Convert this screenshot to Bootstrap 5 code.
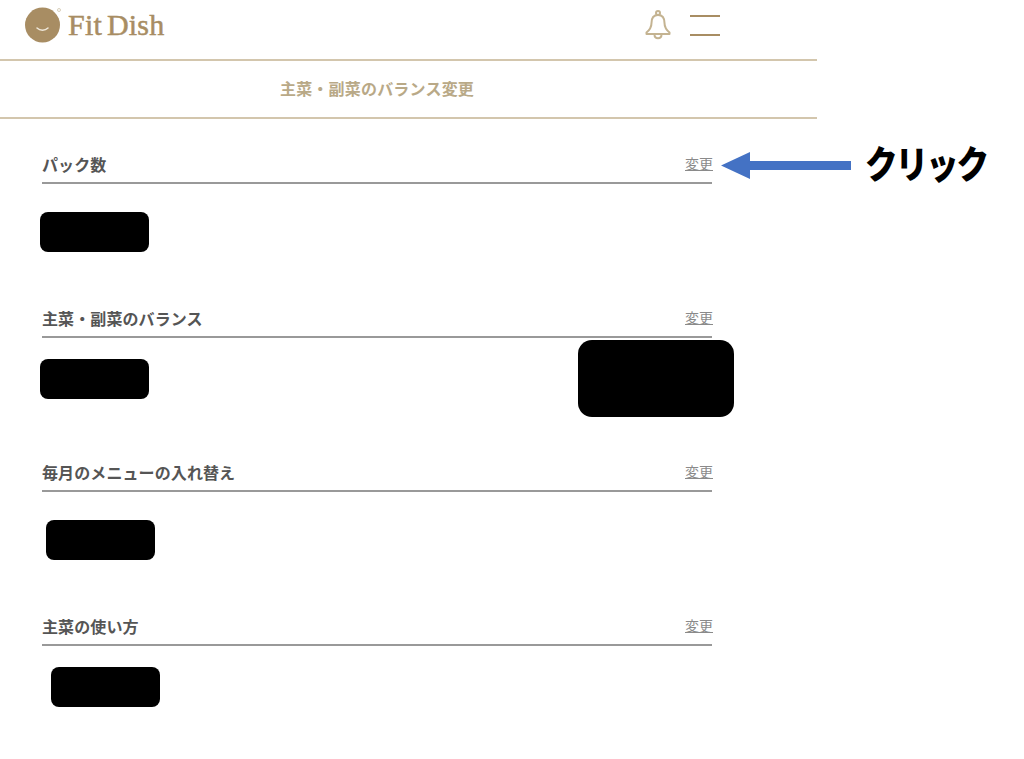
<!DOCTYPE html>
<html lang="ja">
<head>
  <meta charset="UTF-8" />
  <meta name="viewport" content="width=device-width, initial-scale=1.0"/>
  <title>主菜・副菜のバランス変更</title>
  <link href="https://cdn.jsdelivr.net/npm/bootstrap@5.3.0/dist/css/bootstrap.min.css" rel="stylesheet"/>
  <style>
    body {
      background: #fff;
      font-family: "Liberation Sans", "Noto Sans CJK JP", sans-serif;
      position: relative;
      min-height: 759px;
    }
    .app-frame { width: 817px; }
    .top-bar {
      height: 61px;
      padding: 0 97px 9px 25px;
      border-bottom: 2px solid #d3c6ad;
    }
    .brand-mark { margin-right: 3px; }
    .brand-name {
      font-family: "Liberation Serif", serif;
      font-size: 30px;
      line-height: 1;
      color: #a88d63;
      letter-spacing: .2px;
      -webkit-text-stroke: .5px #a88d63;
    }
    .brand-name span { margin-left: 5px; }
    .top-icons { gap: 19px; }
    .menu-lines { width: 30px; height: 21px; }
    .menu-lines div { height: 2px; background: #a88d63; }
    .page-title {
      height: 58px;
      padding: 2px 63px 0 0;
      border-bottom: 2px solid #d3c6ad;
      color: #b9a987;
      font-size: 16px;
      letter-spacing: .2px;
      font-weight: 700;
    }
    .setting-block { height: 154px; padding: 0 105px 0 42px; position: relative; }
    .setting-head {
      height: 27px;
      padding-bottom: 7px;
      border-bottom: 2px solid #999;
      color: #555;
      font-size: 16px;
      letter-spacing: .1px;
      font-weight: 700;
    }
    .setting-head a {
      color: #8a8a8a;
      font-size: 14px;
      font-weight: 400;
      letter-spacing: 0;
      margin: 0 -1px 4px 0;
    }
    .block-list { padding-top: 38px; }
    .mask-box { width: 109px; height: 40px; background: #000; border-radius: 8px; }
    .mask-wide {
      position: absolute;
      left: 578px;
      top: 29px;
      width: 156px;
      height: 77px;
      border-radius: 14px;
      background: #000;
    }
    .mt-block-a { margin: 28px 0 0 -2px; }
    .mt-block-b { margin: 21px 0 0 -2px; }
    .mt-block-c { margin: 28px 0 0 4px; }
    .mt-block-d { margin: 21px 0 0 9px; }
    .note-arrow { position: absolute; left: 721px; top: 152px; }
    .note-text {
      position: absolute;
      left: 865px;
      top: 139px;
      font-size: 38px;
      line-height: 52px;
      font-weight: 900;
      letter-spacing: -2.5px;
      color: #000;
      transform: scaleX(.86);
      transform-origin: left center;
    }
  </style>
</head>
<body>
  <div class="app-frame">
    <!-- Header -->
    <div class="top-bar d-flex align-items-center justify-content-between">
      <div class="d-flex align-items-center">
        <svg class="brand-mark" width="40" height="38" viewBox="0 0 40 38">
          <ellipse cx="17.5" cy="19" rx="17.5" ry="17.5" fill="#a88d63"/>
          <path d="M12 22c3 3 8 3 11 0" fill="none" stroke="#efe8da" stroke-width="1.500" stroke-linecap="round"/>
          <circle cx="34" cy="4" r="1.500" fill="none" stroke="#c9bb9f" stroke-width=".7"/>
        </svg>
        <div class="brand-name">Fit<span>Dish</span></div>
      </div>
      <div class="top-icons d-flex align-items-center">
        <svg width="26" height="30" viewBox="0 0 26 30" fill="none" stroke="#c4b391" stroke-width="2" stroke-linejoin="round">
          <circle cx="13" cy="3" r="2"/>
          <path d="M13 5c-4.500 0-6.500 3.500-6.500 8 0 5-2.500 7.500-5 9.500v1.500h23v-1.500c-2.500-2-5-4.500-5-9.500 0-4.500-2-8-6.500-8z"/>
          <path d="M9.500 24.500c0 5 7 5 7 0"/>
        </svg>
        <div class="menu-lines d-flex flex-column justify-content-between">
          <div></div>
          <div></div>
        </div>
      </div>
    </div>

    <div class="page-title d-flex align-items-center justify-content-center">主菜・副菜のバランス変更</div>

    <!-- Settings -->
    <div class="block-list">
      <div class="setting-block">
        <div class="setting-head d-flex justify-content-between align-items-center">
          <span>パック数</span><a href="#">変更</a>
        </div>
        <div class="mask-box mt-block-a"></div>
      </div>
      <div class="setting-block">
        <div class="setting-head d-flex justify-content-between align-items-center">
          <span>主菜・副菜のバランス</span><a href="#">変更</a>
        </div>
        <div class="mask-box mt-block-b"></div>
        <div class="mask-wide"></div>
      </div>
      <div class="setting-block">
        <div class="setting-head d-flex justify-content-between align-items-center">
          <span>毎月のメニューの入れ替え</span><a href="#">変更</a>
        </div>
        <div class="mask-box mt-block-c"></div>
      </div>
      <div class="setting-block">
        <div class="setting-head d-flex justify-content-between align-items-center">
          <span>主菜の使い方</span><a href="#">変更</a>
        </div>
        <div class="mask-box mt-block-d"></div>
      </div>
    </div>
  </div>

  <!-- Annotation -->
  <svg class="note-arrow" width="131" height="28" viewBox="0 0 131 28">
    <path d="M0 13.500L29 0V9H130V18H29V27z" fill="#4472c4"/>
  </svg>
  <div class="note-text">クリック</div>
</body>
</html>
